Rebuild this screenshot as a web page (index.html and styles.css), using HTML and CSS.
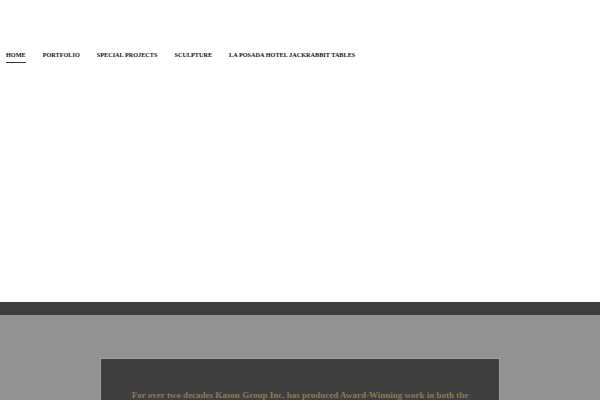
FILE: index.html
```html
<!DOCTYPE html>
<html>
<head>
<meta charset="utf-8">
<link rel="stylesheet" href="styles.css">
</head>
<body>
<header class="header">
  <nav class="nav">
    <a class="nav-item active" href="#">Home</a>
    <a class="nav-item" href="#">Portfolio</a>
    <a class="nav-item" href="#">Special Projects</a>
    <a class="nav-item" href="#">Sculpture</a>
    <a class="nav-item" href="#">La Posada Hotel Jackrabbit Tables</a>
  </nav>
</header>
<div class="hero"></div>
<div class="band"></div>
<section class="main">
  <div class="box">
    <p class="intro">For over two decades Kason Group Inc. has produced Award-Winning work in both the</p>
  </div>
</section>
</body>
</html>
```
FILE: styles.css
```css
* { box-sizing: border-box; }
html, body { margin: 0; padding: 0; }
body { background: #fff; font-family: "Liberation Serif", serif; overflow: hidden; width: 600px; height: 400px; }
.header { padding-top: 51px; padding-left: 6px; height: 70px; }
.nav { display: flex; gap: 17px; }
.nav-item {
  font-size: 6.2px;
  font-weight: bold;
  text-transform: uppercase;
  letter-spacing: 0.02px;
  color: #111;
  text-decoration: none;
  padding-bottom: 3px;
  line-height: 8px;
}
.nav-item.active { border-bottom: 1px solid #333; }
.hero { height: 232px; }
.band { height: 13px; background: #3d3d3d; }
.main { background: #929292; padding-top: 43px; height: 100px; }
.box {
  width: 400px;
  margin-left: 100px;
  background: #3f3f3f;
  border-top: 1px solid #a0a0a0;
  border-left: 1px solid #a0a0a0;
  border-right: 1px solid #a0a0a0;
  padding-top: 30px;
  height: 60px;
}
.intro {
  margin: 0;
  text-align: center;
  font-size: 9px;
  font-weight: bold;
  color: #8d7c55;
  line-height: 12px;
}
```
